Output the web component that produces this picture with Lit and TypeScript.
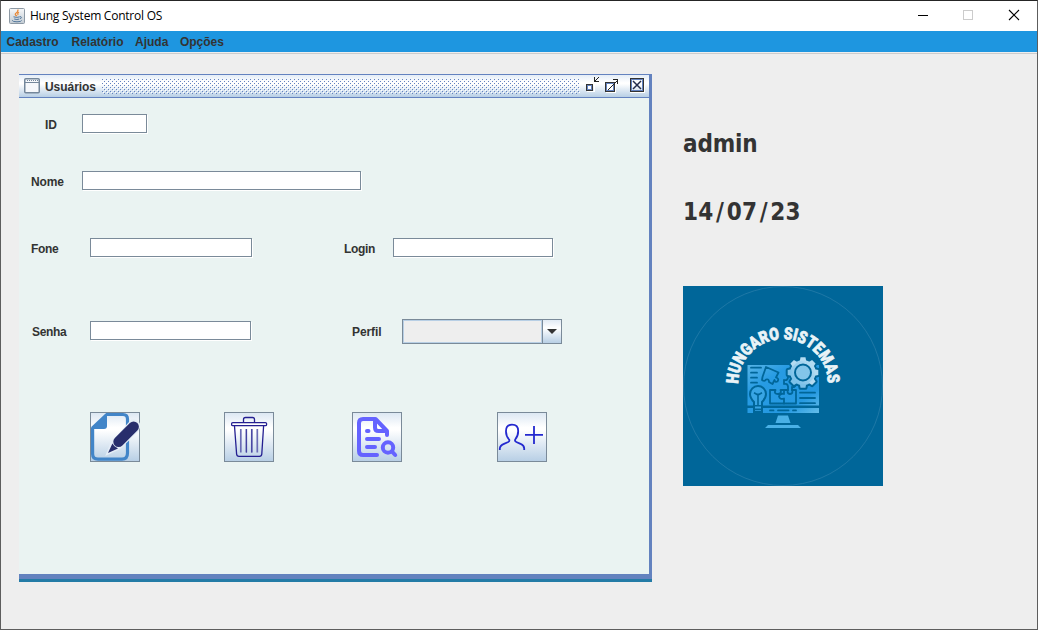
import { LitElement, html, css, svg } from "lit";
import { customElement } from "lit/decorators.js";

const trash = svg`
  <g fill="none" stroke="#241f91" stroke-width="1.3" stroke-linejoin="round">
    <path d="M19.5 10V7.5Q19.5 5.5 21.5 5.5H28.5Q30.5 5.5 30.5 7.5V10"/>
    <rect x="7.6" y="10.6" width="35" height="3" rx="1.2" fill="#fff"/>
    <path d="M10.5 14L12.6 42Q12.8 44.4 15 44.4H35.5Q37.6 44.4 37.8 42L39.6 14"/>
    <path d="M16.8 17V40.5M22.3 17V40.5M27.8 17V40.5M33.3 17V40.5" stroke="#6a6cb4" stroke-width="1.7"/>
    <path d="M22.5 17V40.5M27.7 17V40.5" stroke="#4341a0" stroke-width="1"/>
  </g>`;

const edit = svg`
  <path d="M16 2.5H33Q37.500 2.500 37.500 7V41Q37.500 47.200 32 47.200H8Q2.600 47.200 2.600 42V16" fill="none" stroke="#4285c8" stroke-width="3.2"/>
  <path d="M15.500 1.500H17V14Q17 17 14 17H1.200V15Z" fill="#4285c8"/>
  <path d="M18 41L22 31L42 9Q48 8 49 14L47 19L29 36Z" fill="none" stroke="#e4edf6" stroke-width="3"/>
  <path d="M28.600 29.800L43.600 14.800" stroke="#282e6c" stroke-width="10.6" stroke-linecap="round"/>
  <path d="M18 41L22.400 31.500Q24 35 28 36.400Z" fill="#282e6c"/>`;

const search = svg`
  <g fill="none" stroke="#6563ff" stroke-width="4" stroke-linecap="round" stroke-linejoin="round">
    <path d="M25 43H11Q7 43 7 39V11Q7 7 11 7H23.500L35 19V23"/>
    <path d="M23 8V15.500Q23 19 26.500 19H34"/>
    <path d="M15 19H16.500M15 27H27M15 35H23"/>
    <circle cx="36" cy="35.5" r="5.2"/><path d="M40 39.500L43.200 43"/>
  </g>`;

const addUser = svg`
  <g fill="none" stroke="#2429cf" stroke-width="1.8">
    <path d="M2.8 38V36.500Q3 33.500 7 31.800L11.200 30Q12.800 29.200 12.200 27.700Q8.800 24 9 19Q9 12.700 15 12.700Q21.200 12.700 21.200 19Q21.200 24 18.200 27.500Q17.500 29.300 19.300 30L23.500 31.800Q27.200 33.500 27.200 36.500V38"/>
    <path d="M28 22.800H46M37 14V32"/>
  </g>`;

const cog = Array.from({ length: 8 }, (_, i) => i * 45);

const logo = svg`
  <defs>
    <linearGradient id="scr" x1="0" y1="0" x2="1" y2="1">
      <stop offset="0" stop-color="#58b5e6"/><stop offset=".3" stop-color="#279be3"/>
      <stop offset=".75" stop-color="#2599e1"/><stop offset="1" stop-color="#65bee9"/>
    </linearGradient>
    <linearGradient id="gear" gradientUnits="userSpaceOnUse" x1="106" y1="100" x2="134" y2="73">
      <stop offset="0" stop-color="#6ab9e6"/><stop offset="1" stop-color="#c4e3f4"/>
    </linearGradient>
    <path id="arc" d="M55.2 98A44.8 44.8 0 0 1 144.800 98"/>
  </defs>
  <rect width="200" height="200" fill="#006699"/>
  <circle cx="100" cy="100" r="99.5" fill="none" stroke="#2b7fac" stroke-width=".7"/>
  <text class="brand"><textPath href="#arc" textLength="140" lengthAdjust="spacingAndGlyphs">HUNGARO SISTEMAS</textPath></text>
  <path d="M64.500 79H136V119.500H64.500ZM64.500 122H136V127H64.500Z" fill="url(#scr)"/>
  <path d="M95 129.500H105L107.500 137H92.500ZM85 139H115L118 142H82Z" fill="#49b0e6"/>
  <g fill="none" stroke="#006699" stroke-width="1.8" stroke-linecap="round" stroke-linejoin="round">
    <path d="M68 81.700H78M68 86.700H74M68 91.700H74M68 96.700H74M117 106.700H132M117 112H132M117 117.200H132"/>
    <path d="M83 81L95.500 86.500L93 91.500Q96.500 92.500 94.500 95.500Q92 96.500 91.500 94L89.500 98L86 96Q86 92.500 83 93.500Q81.500 96 79 94L79.500 91Z"/>
    <path d="M87 104H92.500Q90.500 108 95 108Q99 107.500 97.500 104H101V108Q97 107 96 110.500Q97 114 101 112.500V117.500H87Z"/>
    <path d="M101 104H105Q103.500 107.500 107 108Q110.500 107.500 109 104H113V117.500H101"/>
    <path d="M101 98V94Q104.500 95 105 91.500M101 98Q104.500 97 105 100.500V104M109 104V101Q112 102 113 98"/>
    <path d="M87 124.400H90.500M95 124.400H105.500M110 124.400H113"/>
  </g>
  <path d="M67 108A8 8 0 1 1 83 108Q83 112 79 116V126H71V116Q67 112 67 108Z" fill="#38a5e4" stroke="#006699" stroke-width="2"/>
  <path d="M71 119.800H79M71 123.400H79M75 119V107.500M71 106.800L75 109L79 106.800" fill="none" stroke="#006699" stroke-width="1.6"/>
  <g stroke="#006699" stroke-width="4" fill="#006699" stroke-linejoin="round">
    <circle cx="120" cy="86.5" r="12.400"/>
    ${cog.map((a) => svg`<path d="M116.800 75L117.500 71.200H122.500L123.200 75Z" transform="rotate(${a} 120 86.5)"/>`)}
  </g>
  <circle cx="120" cy="86.5" r="12.600" fill="url(#gear)"/>
  ${cog.map((a) => svg`<path d="M116.800 75L117.500 71.200H122.500L123.200 75Z" fill="${a > 150 && a < 280 ? "#7cc1e8" : "#b3dbf1"}" transform="rotate(${a} 120 86.5)"/>`)}
  <circle cx="120" cy="86.5" r="8" fill="#83c5e9" stroke="#006699" stroke-width="2"/>`;

@customElement("app-root")
export class AppRoot extends LitElement {
  static styles = css`
    :host { display: block; font: bold 12px/15px "Liberation Sans", Arial, sans-serif; color: #333; }
    * { box-sizing: border-box; }
    svg { display: block; flex: none; }
    .window { width: 1038px; height: 630px; border: 1px solid #5d5d5d; border-top-color: #252525; background: #eee; display: flex; flex-direction: column; overflow: hidden; }
    .titlebar { height: 30px; background: #fff; display: flex; align-items: center; padding-left: 8px; flex: none; }
    .title { font: 12px/16px "Open Sans", sans-serif; color: #000; margin-left: 5px; letter-spacing: -0.24px; flex: 1; }
    .menu { height: 21px; background: #1e96e0; display: flex; padding: 4px 0 0 5.5px; gap: 13px; flex: none; }
    .menu span:nth-child(3) { margin-left: -1.5px; }
    .menu span:nth-child(4) { margin-left: -1.5px; }
    .rule { height: 2px; border-bottom: 1px solid #ccc; background: #eee; flex: none; }
    .desk { display: flex; padding: 20px 0 0 18px; align-items: flex-start; }
    .frame { width: 633px; height: 508px; background: #eaf3f2; border: solid #6382bf; border-width: 1px 3px 0 0; display: flex; flex-direction: column; }
    .caption { height: 23px; border-bottom: 1px solid #6382bf; background: linear-gradient(#e4edf7, #fff 35%, #fff 40%, #b8cfe5); display: flex; padding: 0 4px 0 5px; flex: none; }
    .caption .ftitle { margin: 5px 6px 0 5px; letter-spacing: -0.05px; }
    .dots { width: 478px; height: 16px; margin-top: 4px; }
    .controls { margin-left: 4px; }
    .form { flex: 1; padding-top: 16px; }
    .row { display: flex; height: 19px; }
    .row.nome { margin-top: 38px; }
    .row.fone { margin-top: 48px; }
    .row.senha { margin-top: 64px; }
    .label { padding: 4px 0 0 12px; flex: none; letter-spacing: -0.1px; }
    .label.c2 { letter-spacing: -0.35px; }
    .c1 { width: 63px; } .c2 { width: 71px; }
    .id { padding-left: 26px; }
    .senha .label { padding-left: 13px; }
    .label.login { margin-left: 80px; width: 61px; letter-spacing: -0.3px; }
    .senha .label.perfil { margin-left: 89px; width: 62px; padding-left: 12px; }
    .input { height: 19px; border: 1px solid #7a8a99; background: #fff; box-shadow: 1px 1px 0 #fff; }
    .w65 { width: 65px; } .w279 { width: 279px; } .w162 { width: 162px; } .w160 { width: 160px; } .w161 { width: 161px; }
    .combo { width: 160px; height: 25px; margin-top: -2px; border: 1px solid #7a8a99; display: flex; }
    .value { flex: 1; background: #eee; border: 1px solid #b8cfe5; }
    .arrow { width: 19px; border-left: 1px solid #7a8a99; background: linear-gradient(#e1eaf4, #fff 35%, #b8cfe5); }
    .actions { display: flex; margin-top: 72px; padding-left: 71px; }
    .btn { width: 50px; height: 50px; border: 1px solid #7a8a99; background: linear-gradient(#dde8f3, #fff 30%, #fff 36%, #b8cfe5); }
    .btn svg { margin: -1px; }
    .del { margin-left: 84px; } .find { margin-left: 78px; } .add { margin-left: 95px; }
    .foot { height: 8px; margin-right: -3px; background: linear-gradient(#6382bf 5px, #237ba6 5px); flex: none; }
    .side { margin-left: 31px; padding-top: 53px; }
    .big { font: bold 24px/34px "DejaVu Sans", sans-serif; font-stretch: condensed; height: 34px; white-space: nowrap; letter-spacing: -0.15px; }
    .date { margin-top: 34px; letter-spacing: 0.3px; }
    .date i { font-style: normal; padding: 0 2.4px; }
    .logo { margin-top: 57px; }
    .brand { font: 900 17px Roboto, sans-serif; fill: #e9f3f7; stroke: #e9f3f7; stroke-width: .7px; }
  `;

  render() {
    return html`
      <div class="window">
        <div class="titlebar">
          <svg width="16" height="16" viewBox="0 0 16 16">
            <defs><linearGradient id="jb" x2="0" y2="1"><stop stop-color="#f7f8f9"/><stop offset="1" stop-color="#c2cbd3"/></linearGradient></defs>
            <rect x=".5" y=".5" width="15" height="15" rx="1" fill="url(#jb)" stroke="#8d99a4"/>
            <path d="M8.8 1.500Q9.500 3.500 7.200 5T8 8M10 4.200Q7.800 5.400 9.300 7" fill="none" stroke="#e98834" stroke-width="1.2"/>
            <path d="M4.500 8.800Q8 10 10.800 8.800M5.200 11Q8 12 10.300 11M11 8.700Q13.800 8.600 11.200 11M3.200 12.400Q3.500 13.800 8 13.800T12.600 12.400" fill="none" stroke="#53779b" stroke-width="1"/>
          </svg>
          <span class="title">Hung System Control OS</span>
          <svg width="120" height="30" viewBox="0 0 120 30">
            <path d="M1 14.500H11" stroke="#000"/>
            <rect x="46.500" y="9.500" width="9" height="9" fill="none" stroke="#ccc"/>
            <path d="M92 9L102 19M102 9L92 19" stroke="#000" stroke-width="1.1"/>
          </svg>
        </div>
        <div class="menu"><span>Cadastro</span><span>Relatório</span><span>Ajuda</span><span>Opções</span></div>
        <div class="rule"></div>
        <div class="desk">
          <div class="frame">
            <div class="caption">
              <svg width="16" height="22" viewBox="0 0 16 22">
                <rect x=".75" y="3.750" width="14.500" height="14" rx="1" fill="#f6f8fb" stroke="#74879b" stroke-width="1.5"/>
                <path d="M1 7.500H15" stroke="#74879b"/><path d="M3 5.500H14" stroke="#74879b" stroke-dasharray="1 1"/>
              </svg>
              <span class="ftitle">Usuários</span>
              <svg class="dots" shape-rendering="crispEdges">
                <defs><pattern id="bump" width="4" height="4" patternUnits="userSpaceOnUse">
                  <rect width="1" height="1" fill="#6382bf"/><rect x="2" y="2" width="1" height="1" fill="#6382bf"/>
                  <rect x="1" y="1" width="1" height="1" fill="#fff"/><rect x="3" y="3" width="1" height="1" fill="#fff"/>
                </pattern></defs>
                <rect width="478" height="15" fill="url(#bump)"/>
              </svg>
              <svg class="controls" width="62" height="22" viewBox="0 0 62 22" shape-rendering="crispEdges">
                <g fill="none">
                  <path d="M3 16.500H10.500V9" stroke="#fff"/>
                  <rect x="2.500" y="9.500" width="6" height="6" stroke="#333"/><rect x="3.500" y="10.500" width="4" height="4" stroke="#6382bf" fill="#fff"/>
                  <path d="M10.500 2V6.500H15M11 6L15 2" stroke="#222"/>
                  <path d="M22 17.500H31.500V9" stroke="#fff"/>
                  <rect x="21.500" y="7.500" width="9" height="9" stroke="#333"/><rect x="22.500" y="8.500" width="7" height="7" stroke="#6382bf" fill="#fff"/>
                  <path d="M24 15L33 6M29 4.500H33.500V9" stroke="#222"/>
                  <path d="M46 17.500H60.500V4" stroke="#fff"/>
                  <rect x="46.500" y="3.500" width="13" height="13" stroke="#333"/><rect x="47.500" y="4.500" width="11" height="11" stroke="#6382bf"/>
                  <path d="M49 6L57 14M57 6L49 14" stroke="#222a4a" stroke-width="1.5" shape-rendering="auto"/>
                </g>
              </svg>
            </div>
            <div class="form">
              <div class="row"><span class="label c1 id">ID</span><div class="input w65"></div></div>
              <div class="row nome"><span class="label c1">Nome</span><div class="input w279"></div></div>
              <div class="row fone"><span class="label c2">Fone</span><div class="input w162"></div><span class="label login">Login</span><div class="input w160"></div></div>
              <div class="row senha"><span class="label c2">Senha</span><div class="input w161"></div><span class="label perfil">Perfil</span>
                <div class="combo"><div class="value"></div><div class="arrow"><svg width="18" height="23"><path d="M4 9H14L9 14Z" fill="#333"/></svg></div></div>
              </div>
              <div class="actions">
                <div class="btn"><svg width="50" height="50">${edit}</svg></div>
                <div class="btn del"><svg width="50" height="50">${trash}</svg></div>
                <div class="btn find"><svg width="50" height="50">${search}</svg></div>
                <div class="btn add"><svg width="50" height="50">${addUser}</svg></div>
              </div>
            </div>
            <div class="foot"></div>
          </div>
          <div class="side">
            <div class="big">admin</div>
            <div class="big date">14<i>/</i>07<i>/</i>23</div>
            <svg class="logo" width="200" height="200">${logo}</svg>
          </div>
        </div>
      </div>`;
  }
}
